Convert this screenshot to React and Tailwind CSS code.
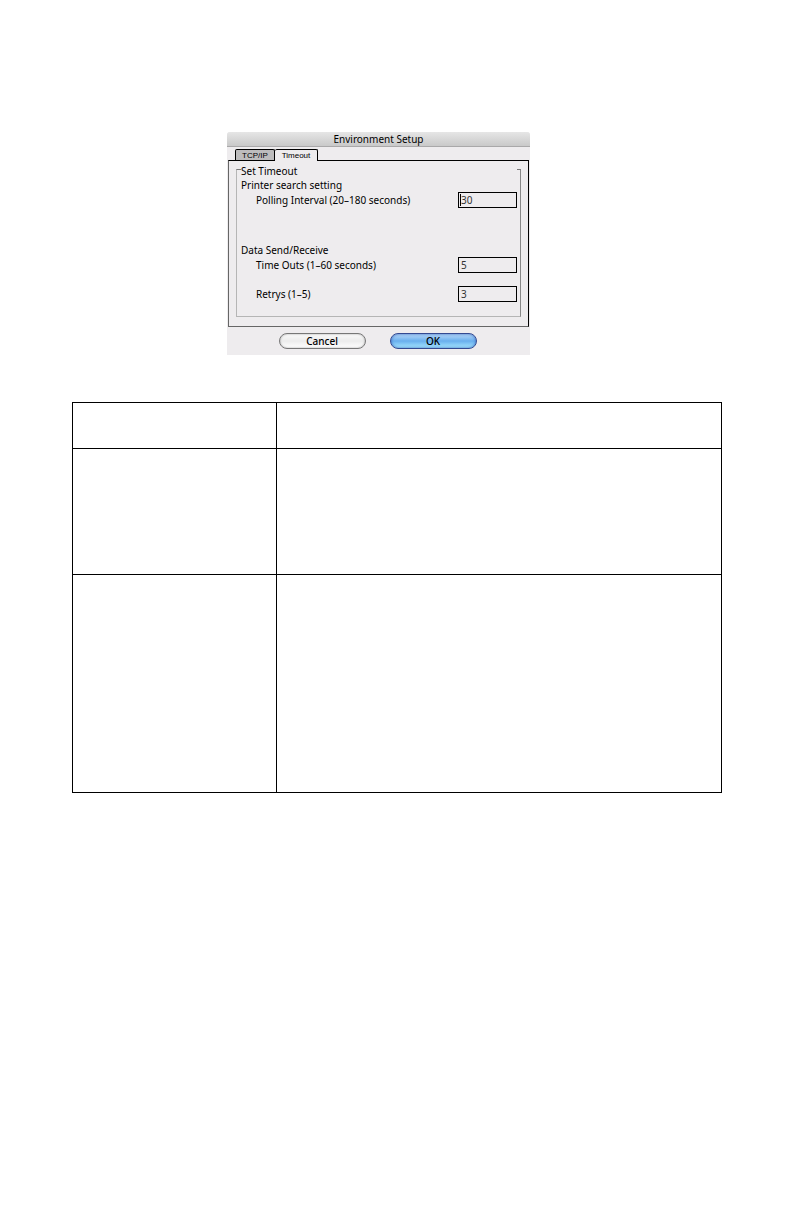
import { useState } from "react";

function Field({ id, label, value, caret }) {
  const [text, setText] = useState(value);
  return (
    <div className="flex h-4 items-center justify-between pl-[15px]">
      <label htmlFor={id}>{label}</label>
      <div className="relative flex">
        <input
          id={id}
          value={text}
          onChange={(e) => setText(e.target.value)}
          className="h-4 w-[59px] border border-black bg-[#eeecee] px-0.5 text-[10px] leading-[14px] text-[#333] outline-none"
        />
        {caret && <span className="absolute top-0.5 left-0.5 h-3 w-px bg-black" />}
      </div>
    </div>
  );
}

const rows = ["h-[46px]", "h-[126px]", "h-[218px]"];

export default function App() {
  return (
    <main className="bg-white pt-[132px] pr-[70px] pb-10 pl-[72px] font-['Noto_Sans',sans-serif] text-[10px] leading-[14px] text-black">
      <section
        aria-labelledby="title"
        className="ml-[155px] w-[303px] rounded-t-[3px] bg-[#eeecee]"
      >
        <h1
          id="title"
          className="h-[15px] rounded-t-[3px] border-b border-[#a9a8a9] bg-linear-to-b from-[#e6e6e6] to-[#c9c9c9] text-center font-normal"
        >
          Environment Setup
        </h1>
        <div className="px-px pt-0.5">
          <div
            role="tablist"
            className="ml-[7px] flex h-[11px] items-start font-['Liberation_Sans',sans-serif] text-[8px] leading-[11px]"
          >
            <button
              role="tab"
              aria-selected="false"
              className="h-[11px] w-10 rounded-t-[2px] border border-b-0 border-black bg-[#bdbcbd]"
            >
              TCP/IP
            </button>
            <button
              role="tab"
              aria-selected="true"
              className="relative h-3 w-[43px] rounded-t-[2px] border border-b-0 border-l-0 border-black bg-[#eeecee]"
            >
              Timeout
            </button>
          </div>
          <div
            role="tabpanel"
            className="border border-t-black border-r-black border-b-[#666] border-l-[#666] px-[7px] pb-[9px]"
          >
            <fieldset className="border border-t-[#777] border-r-[#888] border-b-[#b5b5b5] border-l-[#b5b5b5] pr-[3px] pb-[14px] pl-1">
              <legend className="w-full pt-[3px]">Set Timeout</legend>
              <p>Printer search setting</p>
              <Field id="polling" label="Polling Interval (20–180 seconds)" value="30" caret />
              <p className="mt-[35px]">Data Send/Receive</p>
              <Field id="timeouts" label="Time Outs (1–60 seconds)" value="5" />
              <div className="mt-[13px]">
                <Field id="retrys" label="Retrys (1–5)" value="3" />
              </div>
            </fieldset>
          </div>
        </div>
        <div className="flex justify-center gap-6 pt-1.5 pr-0.5 pb-1.5">
          <button className="h-4 w-[87px] rounded-full border border-[#777] bg-linear-to-b from-[#fafafa] via-[#ececec] to-white font-medium shadow-[inset_0_0_2px_#999]">
            Cancel
          </button>
          <button className="h-4 w-[87px] rounded-full border border-[#344a91] bg-linear-to-b from-[#b9daf7] via-[#69afee] to-[#a9eaff] font-medium shadow-[inset_0_0_3px_#3565bd]">
            OK
          </button>
        </div>
      </section>
      <table className="mt-[47px] w-full table-fixed border-collapse">
        <colgroup>
          <col className="w-[204px]" />
          <col />
        </colgroup>
        <tbody>
          {rows.map((height) => (
            <tr key={height} className={height}>
              <td className="border border-black" />
              <td className="border border-black" />
            </tr>
          ))}
        </tbody>
      </table>
    </main>
  );
}
